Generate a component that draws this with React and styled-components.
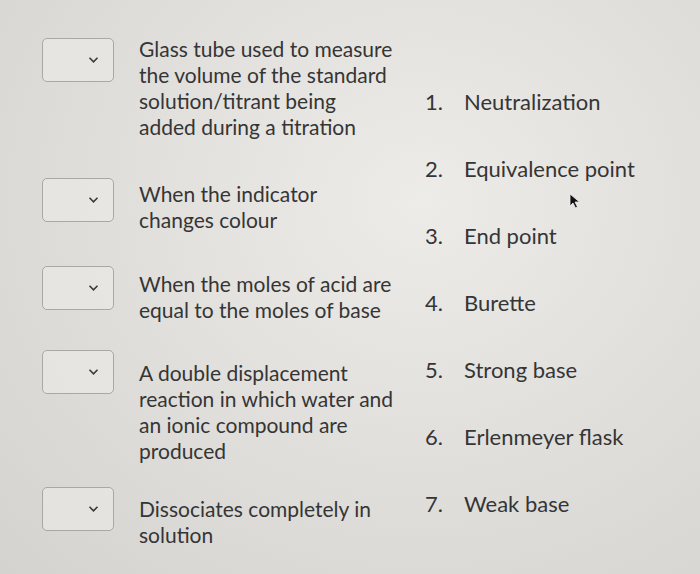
import React from 'react'
import styled, { createGlobalStyle } from 'styled-components'

const GlobalStyle = createGlobalStyle`
  html, body {
    margin: 0;
    padding: 0;
  }
  body {
    font-family: Lato, "Open Sans", sans-serif;
    color: #353535;
    background: #e2e0dd;
  }
`

const Page = styled.div`
  position: relative;
  width: 700px;
  height: 574px;
  overflow: hidden;
  box-sizing: border-box;
  padding: 36px 0 0 42px;
  display: flex;
  background:
    radial-gradient(ellipse at 60% 35%, rgba(238,237,234,0.9) 0%, rgba(228,226,223,0.4) 45%, rgba(203,201,198,0.55) 100%),
    #e1dfdc;
`

const Prompts = styled.div`
  width: 383px;
  display: flex;
  flex-direction: column;
`

const Row = styled.div`
  display: flex;
  align-items: flex-start;
  gap: 25px;
  margin-top: ${props => props.$space}px;
`

const Select = styled.div`
  flex: none;
  width: 72px;
  height: 44px;
  margin-top: 2px;
  box-sizing: border-box;
  border: 1px solid #a9a8a6;
  border-radius: 5px;
  background: rgba(236,235,232,0.6);
  display: flex;
  align-items: center;
  padding-left: 45px;

  svg {
    width: 11px;
    height: 8px;
  }
`

const Prompt = styled.div`
  font-size: 21px;
  line-height: 26px;
  padding-top: ${props => props.$shift}px;
`

const Answers = styled.ol`
  list-style: none;
  margin: 52px 0 0 0;
  padding: 0;
  display: flex;
  flex-direction: column;
  gap: 40px;
`

const Answer = styled.li`
  display: flex;
  font-size: 22px;
  line-height: 27px;
`

const Num = styled.span`
  width: 39px;
  flex: none;
`

const Pointer = styled.svg`
  position: absolute;
  left: 569px;
  top: 193px;
  width: 12px;
  height: 16px;
`

const Chevron = () => (
  <svg viewBox="0 0 11 8">
    <path d="M1.5 1.8 L5.5 5.8 L9.5 1.8" fill="none" stroke="#3a3a3a" strokeWidth="1.6" />
  </svg>
)

const prompts = [
  { text: ['Glass tube used to measure', 'the volume of the standard', 'solution/titrant being', 'added during a titration'], space: 0, shift: 0 },
  { text: ['When the indicator', 'changes colour'], space: 36, shift: 5 },
  { text: ['When the moles of acid are', 'equal to the moles of base'], space: 31, shift: 7 },
  { text: ['A double displacement', 'reaction in which water and', 'an ionic compound are', 'produced'], space: 25, shift: 12 },
  { text: ['Dissociates completely in', 'solution'], space: 21, shift: 11 },
]

const answers = ['Neutralization', 'Equivalence point', 'End point', 'Burette', 'Strong base', 'Erlenmeyer flask', 'Weak base']

export default function App() {
  return (
    <Page>
      <GlobalStyle />
      <Prompts>
        {prompts.map((p, i) => (
          <Row key={i} $space={p.space}>
            <Select><Chevron /></Select>
            <Prompt $shift={p.shift}>
              {p.text.map((line, j) => <div key={j}>{line}</div>)}
            </Prompt>
          </Row>
        ))}
      </Prompts>
      <Answers>
        {answers.map((a, i) => (
          <Answer key={i}>
            <Num>{i + 1}.</Num>
            <span>{a}</span>
          </Answer>
        ))}
      </Answers>
      <Pointer viewBox="0 0 12 16">
        <path d="M1 1 L1 13 L4 10 L6.5 15 L8.5 14 L6 9 L10.5 9 Z" fill="#111" stroke="#eee" strokeWidth="0.8" />
      </Pointer>
    </Page>
  )
}
